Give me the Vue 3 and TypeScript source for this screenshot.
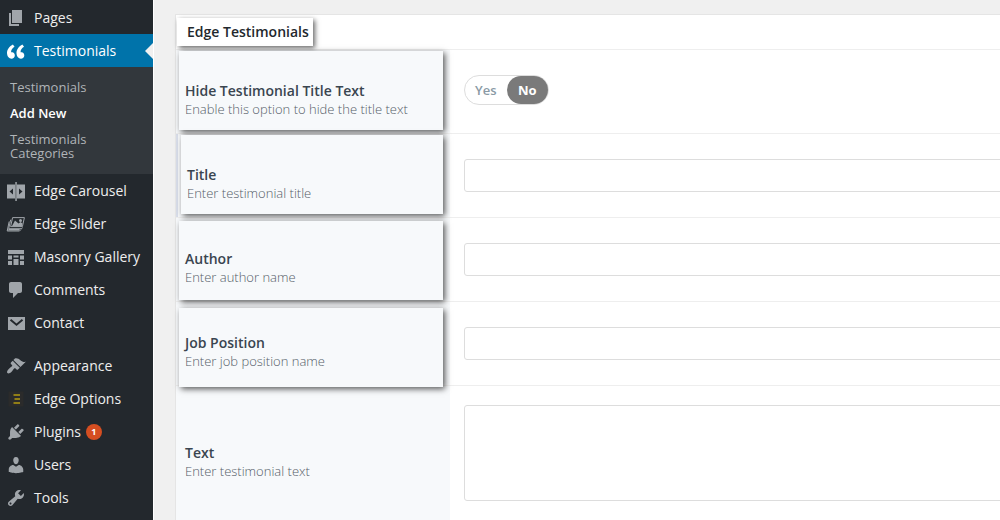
<script setup lang="ts">
import { ref } from 'vue'

type MenuItem = {
  label: string
  icon: string
  path?: string
  current?: boolean
  spaced?: boolean
  badge?: number
}

const menu: MenuItem[] = [
  { label: 'Pages', icon: 'pages', path: 'M6 15V2h10v13H6zm-1 1h8v2H3V5h2v11z' },
  {
    label: 'Testimonials',
    icon: 'quote',
    current: true,
    path: 'M9.49 13.22c0-.74-.2-1.38-.61-1.9-.62-.78-1.83-.88-2.53-.72-.29-1.65 1.11-3.75 2.92-4.65L7.88 4c-2.73 1.3-5.42 4.28-4.96 8.05C3.21 14.43 4.59 16 6.54 16c.85 0 1.56-.25 2.12-.75s.83-1.18.83-2.03zm8.05 0c0-.74-.2-1.38-.61-1.9-.63-.78-1.83-.88-2.53-.72-.29-1.65 1.11-3.75 2.92-4.65L15.93 4c-2.73 1.3-5.41 4.28-4.95 8.05.28 2.38 1.66 3.95 3.61 3.95.85 0 1.56-.25 2.12-.75s.83-1.18.83-2.03z',
  },
  { label: 'Edge Carousel', icon: 'carousel' },
  { label: 'Edge Slider', icon: 'slider' },
  { label: 'Masonry Gallery', icon: 'masonry' },
  {
    label: 'Comments',
    icon: 'comments',
    path: 'M5 2h9c1.1 0 2 .9 2 2v7c0 1.1-.9 2-2 2h-2l-5 5v-5H5c-1.1 0-2-.9-2-2V4c0-1.1.9-2 2-2z',
  },
  { label: 'Contact', icon: 'mail' },
  {
    label: 'Appearance',
    icon: 'appearance',
    spaced: true,
    path: 'M14.48 11.06L7.41 3.99l1.5-1.5c.5-.56 2.3-.47 3.51.32 1.21.8 1.43 1.28 2.91 2.1 1.18.64 2.45 1.26 4.45.85zm-.71.71L6.7 4.7 4.93 6.47c-.39.39-.39 1.02 0 1.41l1.06 1.06c.39.39.39 1.03 0 1.42-.6.6-1.43 1.11-2.21 1.69-.35.26-.7.53-1.01.84C1.43 14.23.4 16.08 1.4 17.07c.99 1 2.84-.03 4.18-1.36.31-.31.58-.66.85-1.02.57-.78 1.08-1.61 1.69-2.21.39-.39 1.02-.39 1.41 0l1.06 1.06c.39.39 1.02.39 1.41 0z',
  },
  { label: 'Edge Options', icon: 'options' },
  {
    label: 'Plugins',
    icon: 'plugins',
    badge: 1,
    path: 'M13.11 4.36L9.87 7.6 8 5.73l3.24-3.24c.35-.34 1.05-.2 1.56.32.52.51.66 1.21.31 1.55zm-8 1.77l.91-1.12 9.01 9.01-1.19.84c-.71.71-2.63 1.16-3.82 1.16H6.14L4.9 17.26c-.59.59-1.54.59-2.12 0-.59-.58-.59-1.53 0-2.12l1.24-1.24v-3.88c0-1.13.4-3.19 1.09-3.89zm7.26 3.97l3.24-3.24c.34-.35 1.04-.21 1.55.31.52.51.66 1.21.31 1.55l-3.24 3.25z',
  },
  {
    label: 'Users',
    icon: 'users',
    path: 'M10 9.25c-2.27 0-2.73-3.44-2.73-3.44C7 4.02 7.82 2 9.97 2c2.16 0 2.98 2.02 2.71 3.81 0 0-.41 3.44-2.68 3.44zm0 2.57L12.72 10c2.39 0 4.52 2.33 4.52 4.53v2.49s-3.65 1.13-7.24 1.13c-3.65 0-7.24-1.13-7.24-1.13v-2.49c0-2.25 1.94-4.48 4.47-4.48z',
  },
  {
    label: 'Tools',
    icon: 'tools',
    path: 'M16.68 9.77c-1.34 1.34-3.3 1.67-4.95.99l-5.41 6.52c-.99.99-2.59.99-3.58 0s-.99-2.59 0-3.57l6.52-5.42c-.68-1.65-.35-3.61.99-4.95 1.28-1.28 3.12-1.62 4.72-1.06l-2.89 2.89 2.82 2.82 2.86-2.87c.53 1.58.18 3.39-1.08 4.65zM3.81 16.21c.4.39 1.04.39 1.43 0 .4-.4.4-1.04 0-1.43-.39-.4-1.03-.4-1.43 0-.39.39-.39 1.03 0 1.43z',
  },
]

const submenu = [
  { label: 'Testimonials', active: false },
  { label: 'Add New', active: true },
  { label: 'Testimonials Categories', active: false },
]

type Field = {
  id: string
  title: string
  hint: string
  kind: 'toggle' | 'text' | 'area'
  callout?: number
  focused?: boolean
}

// callout: distance of the floating highlight from the top of its row
const fields: Field[] = [
  { id: 'hide-title', title: 'Hide Testimonial Title Text', hint: 'Enable this option to hide the title text', kind: 'toggle', callout: 1 },
  { id: 'title', title: 'Title', hint: 'Enter testimonial title', kind: 'text', callout: 1, focused: true },
  { id: 'author', title: 'Author', hint: 'Enter author name', kind: 'text', callout: 3 },
  { id: 'job', title: 'Job Position', hint: 'Enter job position name', kind: 'text', callout: 6 },
  { id: 'text', title: 'Text', hint: 'Enter testimonial text', kind: 'area' },
]

const hideTitle = ref<'Yes' | 'No'>('No')
const values = ref<Record<string, string>>({ title: '', author: '', job: '', text: '' })
</script>

<template>
  <div class="admin">
    <nav class="sidebar" aria-label="Main menu">
      <ul class="menu">
        <li v-for="item in menu" :key="item.label" :class="{ spaced: item.spaced }">
          <a href="#" class="menu-link" :class="{ current: item.current }">
            <svg class="icon" :viewBox="item.icon === 'quote' ? '2 1 17 17' : '0 0 20 20'" aria-hidden="true">
              <path v-if="item.path" :d="item.path" />
              <g v-else-if="item.icon === 'carousel'">
                <path d="M1 3.500h8v14H1zM11 3.500h8v14h-8z" />
                <path d="M9.300 1h1.500v19H9.300z" />
                <path class="cut" d="M7 7.500v6L3.500 10.500zM13 7.500v6l3.500-3z" />
              </g>
              <g v-else-if="item.icon === 'slider'">
                <path class="line" d="M6.600 3.600h11.800l-2 9H4.600z" />
                <path d="M6 12l3-5.500 3.500 3 2-1.500 2 1.500-.8 3H6z" />
                <circle cx="14.500" cy="6.500" r="1.500" />
                <path class="line" d="M4.700 5.700l-2 9h12.500l1.500-1M3.200 7.500l-2 9.500h12.300l1.500-1.500" />
                <path d="M2.500 15h11.500l-1 1.500H2z" />
              </g>
              <g v-else-if="item.icon === 'masonry'">
                <path d="M2 3h16v4H2zM2 8.500h4v4H2zM2 14h4v4H2zM7.500 8.500h5v2h-5zM7.500 12h5v6h-5zM14 8.500h4v4h-4zM14 14h4v4h-4z" />
              </g>
              <g v-else-if="item.icon === 'mail'">
                <path d="M2 4h17v13H2z" />
                <path class="fold" d="M4.500 6.700l6 5 6-5" />
              </g>
              <g v-else>
                <path class="tile" d="M2.500 2.500h15v15h-15z" />
                <path class="bars" d="M7.500 6h6.500M8.500 10H14M7.500 14h6.500" />
              </g>
            </svg>
            <span>{{ item.label }}</span>
            <span v-if="item.badge" class="badge">{{ item.badge }}</span>
          </a>
          <ul v-if="item.current" class="submenu">
            <li v-for="sub in submenu" :key="sub.label">
              <a href="#" :class="{ active: sub.active }">{{ sub.label }}</a>
            </li>
          </ul>
        </li>
      </ul>
    </nav>

    <main class="content">
      <section class="panel">
        <header class="panel-head">
          <h2>Edge Testimonials</h2>
        </header>
        <div v-for="field in fields" :key="field.id" class="row">
          <div class="label-cell" :class="{ focused: field.focused }">
            <span v-if="field.callout" class="callout" :style="{ top: field.callout + 'px' }"></span>
            <div class="caption">
              <label :for="field.id + (field.kind === 'toggle' ? '-No' : '')">{{ field.title }}</label>
              <p>{{ field.hint }}</p>
            </div>
          </div>
          <div class="control-cell">
            <div v-if="field.kind === 'toggle'" class="toggle" role="radiogroup" :aria-label="field.title">
              <label v-for="choice in ['Yes', 'No']" :key="choice" :class="{ chosen: hideTitle === choice }">
                <input :id="field.id + '-' + choice" v-model="hideTitle" type="radio" :name="field.id" :value="choice" />
                {{ choice }}
              </label>
            </div>
            <input v-else-if="field.kind === 'text'" :id="field.id" v-model="values[field.id]" class="box" type="text" />
            <textarea v-else :id="field.id" v-model="values[field.id]" class="box area"></textarea>
          </div>
        </div>
      </section>
    </main>
  </div>
</template>

<style>
body {
  margin: 0;
  background: #f0f0f0;
}
</style>

<style scoped>
.admin {
  display: flex;
  min-height: 100vh;
  overflow: hidden;
  font-family: "Open Sans", "Noto Sans", sans-serif;
  background: #f0f0f0;
}

ul {
  list-style: none;
  margin: 0;
  padding: 0;
}

a {
  text-decoration: none;
}

.sidebar {
  flex: none;
  width: 153px;
  background: #23282d;
  border-right: 1px solid #fff;
}

.menu {
  padding: 1px 0 5px;
}

.spaced {
  margin-top: 10px;
}

.menu-link {
  position: relative;
  display: flex;
  align-items: center;
  height: 33px;
  padding-left: 6px;
  font-size: 14px;
  line-height: 20px;
  color: #eee;
}

.menu-link.current {
  background: #0073aa;
  color: #fff;
}

.menu-link.current::after {
  content: "";
  position: absolute;
  top: 9px;
  right: 0;
  border: 8px solid transparent;
  border-right-color: #f0f0f0;
  border-left-width: 0;
}

.icon {
  flex: none;
  width: 20px;
  height: 20px;
  margin-right: 8px;
  fill: #a0a5aa;
}

.current .icon {
  fill: #fff;
}

.cut {
  fill: #23282d;
}

.line {
  fill: none;
  stroke: #a0a5aa;
  stroke-width: 1;
}

.fold {
  fill: none;
  stroke: #23282d;
  stroke-width: 2;
}

.tile {
  fill: #2b2b2b;
}

.bars {
  fill: none;
  stroke: #b49a12;
  stroke-width: 1.5;
}

.badge {
  width: 16px;
  height: 16px;
  margin-left: 5px;
  border-radius: 8px;
  background: #d54e21;
  color: #fff;
  font-size: 9px;
  font-weight: 700;
  line-height: 16px;
  text-align: center;
}

.submenu {
  display: flex;
  flex-direction: column;
  gap: 12px;
  padding: 13px 40px 14px 10px;
  background: #32373c;
}

.submenu a {
  display: block;
  font-size: 13px;
  line-height: 14px;
  color: #b0b4b8;
}

.submenu a.active {
  color: #fff;
  font-weight: 600;
}

.content {
  flex: 1;
  min-width: 0;
  padding: 14px 0 0 21px;
}

.panel {
  margin-right: -1px;
  border: 1px solid #e5e5e5;
  border-bottom: 0;
  background: #fff;
}

.panel-head {
  padding: 3px 1px;
  border-bottom: 1px solid #eee;
}

.panel-head h2 {
  position: relative;
  z-index: 1;
  width: fit-content;
  margin: 0;
  padding: 4px 4px 4px 10px;
  background: #fff;
  box-shadow: 2px 2px 5px rgba(0, 0, 0, 0.6);
  font-size: 14px;
  font-weight: 600;
  line-height: 20px;
  color: #23282d;
}

.row {
  display: flex;
  border-bottom: 1px solid #eee;
}

.row:last-child {
  border-bottom: 0;
}

.label-cell {
  position: relative;
  box-sizing: border-box;
  display: flex;
  align-items: center;
  flex: none;
  width: 274px;
  background: #f7f9fb;
}

.label-cell.focused {
  border-left: 2px solid #d8dde9;
}

.callout {
  position: absolute;
  z-index: 1;
  left: 3px;
  right: 7px;
  height: 79px;
  background: #f7f9fb;
  box-shadow: 2px 2px 6px rgba(0, 0, 0, 0.65);
}

.caption {
  position: relative;
  z-index: 2;
  padding: 17px 0 0 9px;
}

.caption label {
  display: block;
  font-size: 14px;
  font-weight: 600;
  line-height: 18px;
  color: #3a4550;
}

.caption p {
  margin: 0;
  font-size: 13px;
  font-weight: 300;
  line-height: 18px;
  color: #555d68;
}

.control-cell {
  display: flex;
  align-items: flex-start;
  flex: 1;
  min-width: 0;
  padding: 25px 0 25px 14px;
}

.row:last-child .control-cell {
  padding-block: 19px;
}

.box {
  box-sizing: border-box;
  flex: 1;
  min-width: 0;
  height: 33px;
  margin-right: -8px;
  padding: 6px 12px;
  border: 1px solid #ddd;
  border-radius: 3px;
  background: #fff;
  font: inherit;
  font-size: 13px;
  outline: none;
}

.area {
  height: 96px;
  resize: none;
}

.toggle {
  display: flex;
  box-sizing: border-box;
  width: 85px;
  height: 30px;
  margin-bottom: 3px;
  border: 1px solid #ddd;
  border-radius: 15px;
  background: #fff;
}

.toggle label {
  flex: 1;
  border-radius: 14px;
  font-size: 13px;
  font-weight: 600;
  line-height: 28px;
  text-align: center;
  color: #8a9aa5;
  cursor: pointer;
}

.toggle label.chosen {
  background: #7a7a7a;
  color: #fff;
  font-weight: 700;
}

.toggle input {
  position: absolute;
  opacity: 0;
  pointer-events: none;
}
</style>
